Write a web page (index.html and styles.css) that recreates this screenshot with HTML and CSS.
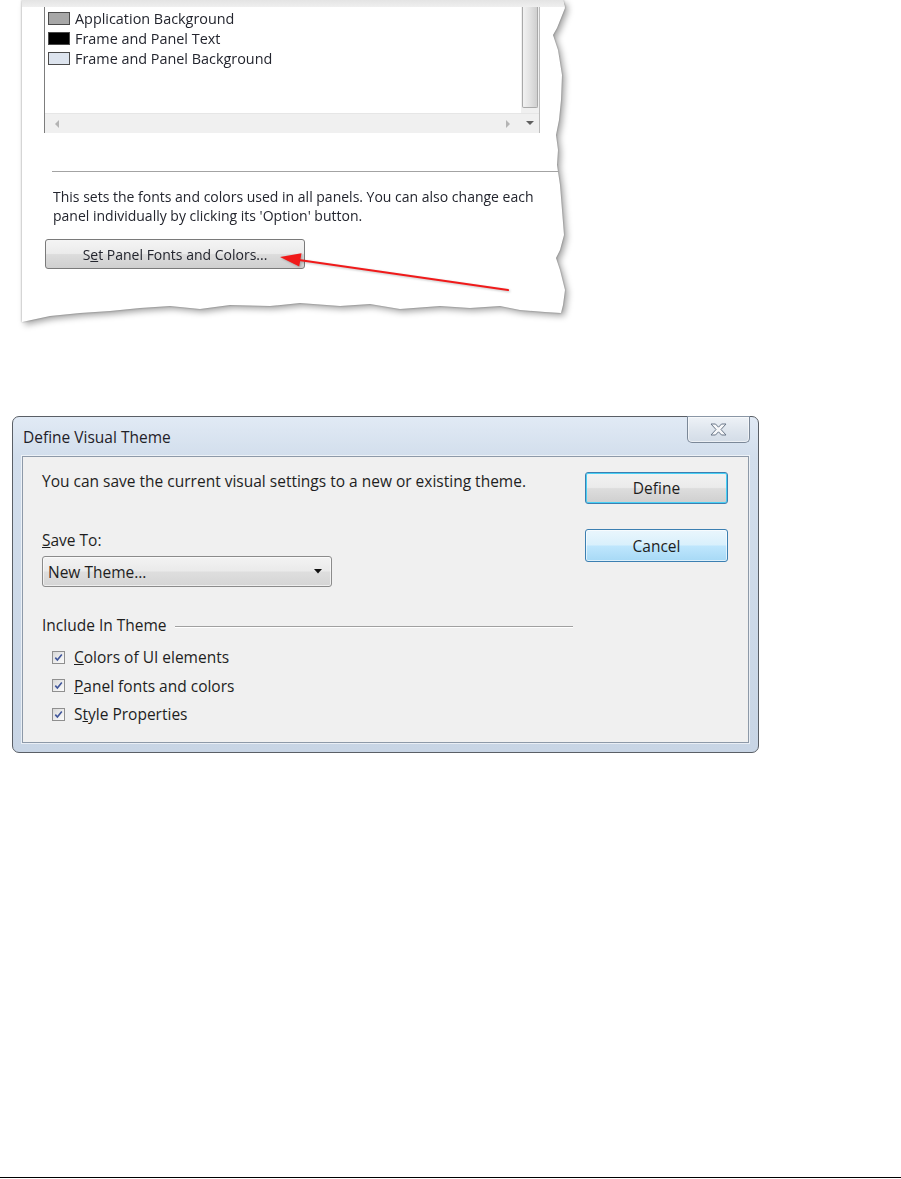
FILE: index.html
```html
<!DOCTYPE html>
<html>
<head>
<meta charset="utf-8">
<title>Define Visual Theme</title>
<link rel="stylesheet" href="styles.css">
</head>
<body>
<div class="page">
  <section class="figure">
    <div class="paper-shadow">
      <div class="paper">
        <div class="paper-band"></div>
        <div class="listbox">
          <ul class="items">
            <li class="item"><span class="swatch swatch-gray"></span><span>Application Background</span></li>
            <li class="item"><span class="swatch swatch-black"></span><span>Frame and Panel Text</span></li>
            <li class="item"><span class="swatch swatch-light"></span><span>Frame and Panel Background</span></li>
          </ul>
          <div class="vscroll"><div class="thumb"></div></div>
          <div class="hscroll">
            <svg class="arrow" width="6" height="8" viewBox="0 0 6 8"><path d="M5 0 L1 4 L5 8 Z" fill="#b4b4b4"/></svg>
            <svg class="arrow" width="6" height="8" viewBox="0 0 6 8"><path d="M1 0 L5 4 L1 8 Z" fill="#b4b4b4"/></svg>
          </div>
          <div class="vbtn"><svg width="8" height="5" viewBox="0 0 8 5"><path d="M0 0 H8 L4 4 Z" fill="#606060"/></svg></div>
        </div>
        <hr class="sep">
        <p class="desc">This sets the fonts and colors used in all panels. You can also change each<br>panel individually by clicking its 'Option' button.</p>
        <button class="btn-set">S<u>e</u>t Panel Fonts and Colors...</button>
      </div>
    </div>
    <svg class="callout" width="901" height="330" viewBox="0 0 901 330">
      <line x1="299" y1="260" x2="508" y2="290" stroke="#f01a1a" stroke-width="2.2" stroke-linecap="round"/>
      <polygon points="280,257 301.5,253.2 299.2,266.4" fill="#f01a1a"/>
    </svg>
  </section>

  <section class="dialog">
    <header class="titlebar">
      <span class="title">Define Visual Theme</span>
      <span class="close">
        <svg width="17" height="13" viewBox="0 0 17 13"><path d="M1 1 H5.5 L8.5 4.2 L11.5 1 H16 L11 6.5 L16 12 H11.5 L8.5 8.8 L5.5 12 H1 L6 6.5 Z" fill="#f7f8fa" stroke="#6a7788" stroke-width="1" stroke-linejoin="round"/></svg>
      </span>
    </header>
    <div class="client">
      <div class="col-main">
        <p class="intro">You can save the current visual settings to a new or existing theme.</p>
        <label class="field-label"><u>S</u>ave To:</label>
        <div class="select">
          <span>New Theme...</span>
          <svg width="8" height="5" viewBox="0 0 8 5"><path d="M0 0 H8 L4 4.5 Z" fill="#111"/></svg>
        </div>
        <div class="group-head"><span>Include In Theme</span></div>
        <ul class="checks">
          <li class="check-row"><span class="box"><svg width="11" height="11" viewBox="0 0 11 11"><path d="M2.3 5.6 L4.4 8 L8.8 2.6" fill="none" stroke="#40569a" stroke-width="1.6"/></svg></span><span><u>C</u>olors of UI elements</span></li>
          <li class="check-row"><span class="box"><svg width="11" height="11" viewBox="0 0 11 11"><path d="M2.3 5.6 L4.4 8 L8.8 2.6" fill="none" stroke="#40569a" stroke-width="1.6"/></svg></span><span><u>P</u>anel fonts and colors</span></li>
          <li class="check-row"><span class="box"><svg width="11" height="11" viewBox="0 0 11 11"><path d="M2.3 5.6 L4.4 8 L8.8 2.6" fill="none" stroke="#40569a" stroke-width="1.6"/></svg></span><span>S<u>t</u>yle Properties</span></li>
        </ul>
      </div>
      <div class="col-buttons">
        <button class="btn btn-default">Define</button>
        <button class="btn btn-hover">Cancel</button>
      </div>
    </div>
  </section>

  <div class="spacer"></div>
  <div class="rule"></div>
</div>
</body>
</html>
```

FILE: styles.css
```css
* { box-sizing: border-box; }
html, body { margin: 0; padding: 0; background: #ffffff; }
body {
  width: 901px;
  height: 1179px;
  overflow: hidden;
  font-family: "Open Sans", "Noto Sans", "Liberation Sans", sans-serif;
  color: #1e1e1e;
}
.page {
  display: flex;
  flex-direction: column;
  height: 1179px;
}

/* ---------- top figure (torn paper) ---------- */
.figure {
  position: relative;
  height: 416px;
  flex: none;
}
.paper-shadow {
  margin-left: 22px;
  width: 545px;
  height: 325px;
  filter: drop-shadow(0 0 1px rgba(0,0,0,0.35)) drop-shadow(3px 3px 3px rgba(0,0,0,0.35));
}
.paper {
  width: 545px;
  height: 325px;
  background: #ffffff;
  display: flex;
  flex-direction: column;
  font-size: 14px;
  color: #23252e;
  clip-path: polygon(0 0, 541px 0, 543px 8px, 535px 28px, 531px 35px, 536px 50px, 540px 75px, 539px 100px, 537px 120px, 534px 135px, 536px 150px, 535px 165px, 538px 185px, 540px 210px, 542px 235px, 538px 250px, 534px 258px, 538px 270px, 543px 290px, 541px 305px, 539px 313px, 523px 312px, 498px 310px, 478px 306px, 448px 308px, 418px 306px, 378px 309px, 348px 304px, 318px 306px, 278px 303px, 248px 306px, 208px 305px, 178px 309px, 148px 306px, 118px 308px, 88px 311px, 58px 313px, 28px 316px, 0 322px);
}
.paper-band {
  height: 7px;
  flex: none;
  background: linear-gradient(180deg, #e4e4e4, #efefef);
}
.listbox {
  margin-left: 22px;
  width: 496px;
  height: 126px;
  flex: none;
  border-left: 1px solid #7d7d7d;
  border-right: 1px solid #bdbdbd;
  display: grid;
  grid-template-columns: 1fr 18px;
  grid-template-rows: 1fr 20px;
}
.items {
  list-style: none;
  margin: 0;
  padding: 1px 0 0 3px;
}
.item {
  height: 20px;
  display: flex;
  align-items: center;
  gap: 5px;
  white-space: nowrap;
  font-size: 14.4px;
}
.swatch {
  width: 22px;
  height: 13px;
  border: 1px solid #4b4b4b;
  flex: none;
}
.swatch-gray { background: #a7a7a7; }
.swatch-black { background: #000000; }
.swatch-light { background: #dde4ee; }
.vscroll {
  background: #f0f0f0;
  display: flex;
  flex-direction: column;
  padding: 0 1px 5px 1px;
}
.thumb {
  flex: 1;
  border: 1px solid #a9a9a9;
  border-top: 0;
  border-radius: 0 0 2px 2px;
  background: linear-gradient(90deg, #f2f2f2 0%, #e4e4e4 45%, #cfcfcf 100%);
}
.hscroll {
  background: #f0f0f0;
  border-top: 1px solid #e6e6e6;
  display: flex;
  align-items: center;
  justify-content: space-between;
  padding: 0 10px 0 9px;
}
.vbtn {
  background: #f0f0f0;
  border-top: 1px solid #e6e6e6;
  display: flex;
  align-items: center;
  justify-content: center;
}
.sep {
  margin: 38px 0 0 30px;
  border: 0;
  height: 1px;
  background: #a3a3a3;
  flex: none;
}
.desc {
  margin: 15px 0 0 31px;
  line-height: 19px;
  white-space: nowrap;
}
.btn-set {
  margin: 14px 0 0 23px;
  width: 260px;
  height: 30px;
  flex: none;
  border: 1px solid #7a7a7a;
  border-radius: 3px;
  background: linear-gradient(180deg, #f4f4f4 0%, #ebebeb 48%, #dcdcdc 52%, #cfcfcf 100%);
  font-family: inherit;
  font-size: 14px;
  color: #23252e;
  padding: 0;
}
.callout {
  position: absolute;
  left: 0;
  top: 0;
  filter: drop-shadow(1px 1px 1px rgba(0,0,0,0.25));
}

/* ---------- dialog ---------- */
.dialog {
  margin-left: 12px;
  width: 747px;
  height: 337px;
  flex: none;
  border: 1px solid #5a5f66;
  border-radius: 7px;
  background: linear-gradient(180deg, #e1eaf5 0%, #d2deec 40px, #c8d5e5 100%);
  padding: 0 9px 9px 9px;
  display: flex;
  flex-direction: column;
  font-size: 15.5px;
}
.titlebar {
  height: 39px;
  flex: none;
  display: flex;
  justify-content: space-between;
  align-items: flex-start;
}
.title {
  margin-top: 10px;
  padding-left: 1px;
  line-height: 20px;
  color: #1f2128;
}
.close {
  width: 63px;
  height: 27px;
  margin-top: -1px;
  margin-right: -1px;
  border: 1px solid #7b8898;
  border-top-color: #8a96a5;
  border-radius: 0 0 5px 5px;
  background: linear-gradient(180deg, #eef2f7 0%, #dfe6ee 50%, #d3dce7 100%);
  display: flex;
  align-items: center;
  justify-content: center;
  box-shadow: inset 0 0 0 1px rgba(255,255,255,0.55);
}
.client {
  flex: 1;
  background: #f0f0f0;
  border: 1px solid #8d99a8;
  box-shadow: 0 0 0 1px rgba(255,255,255,0.6);
  display: flex;
  padding: 14px 20px 0 19px;
}
.col-main {
  width: 531px;
  flex: none;
  display: flex;
  flex-direction: column;
}
.intro {
  margin: 0;
  line-height: 20px;
  white-space: nowrap;
}
.field-label {
  margin-top: 39px;
  line-height: 20px;
}
.select {
  margin-top: 6px;
  width: 290px;
  height: 31px;
  border: 1px solid #8b8b8b;
  border-radius: 3px;
  background: linear-gradient(180deg, #f3f3f3 0%, #eaeaea 48%, #dedede 52%, #d5d5d5 100%);
  box-shadow: inset 0 0 0 1px rgba(255,255,255,0.6);
  display: flex;
  align-items: center;
  justify-content: space-between;
  padding: 0 9px 0 5px;
}
.group-head {
  margin-top: 28px;
  line-height: 20px;
  display: flex;
  align-items: center;
}
.group-head::after {
  content: "";
  flex: 1;
  margin-left: 8px;
  margin-top: 2px;
  height: 1px;
  background: #a0a0a0;
  box-shadow: 0 1px 0 #ffffff;
}
.checks {
  list-style: none;
  margin: 8px 0 0 0;
  padding: 0 0 0 10px;
}
.check-row {
  height: 28.5px;
  display: flex;
  align-items: center;
  gap: 9px;
}
.box {
  width: 13px;
  height: 13px;
  flex: none;
  border: 1px solid #8f8f8f;
  background: linear-gradient(135deg, #d8d8d8 0%, #f2f2f2 70%, #fbfbfb 100%);
  display: flex;
  align-items: center;
  justify-content: center;
}
.col-buttons {
  margin-left: 12px;
  width: 143px;
  display: flex;
  flex-direction: column;
  padding-top: 1px;
}
.btn {
  width: 143px;
  font-family: inherit;
  font-size: 15.5px;
  color: #1e1e1e;
  border-radius: 3px;
  border: 1px solid #3c7fb1;
  padding: 0;
}
.btn-default {
  height: 32px;
  background: linear-gradient(180deg, #f2f2f2 0%, #ebebeb 48%, #dddddd 52%, #cfcfcf 100%);
  box-shadow: inset 0 0 0 1px #48d0f5;
}
.btn-hover {
  margin-top: 25px;
  height: 33px;
  background: linear-gradient(180deg, #eaf6fd 0%, #d9f0fc 48%, #bee6fd 52%, #a7d9f5 100%);
  box-shadow: inset 0 0 0 1px rgba(255,255,255,0.6);
}
.spacer { flex: 1; }
.rule {
  height: 1px;
  background: #000000;
  margin-bottom: 1px;
  flex: none;
}
```
